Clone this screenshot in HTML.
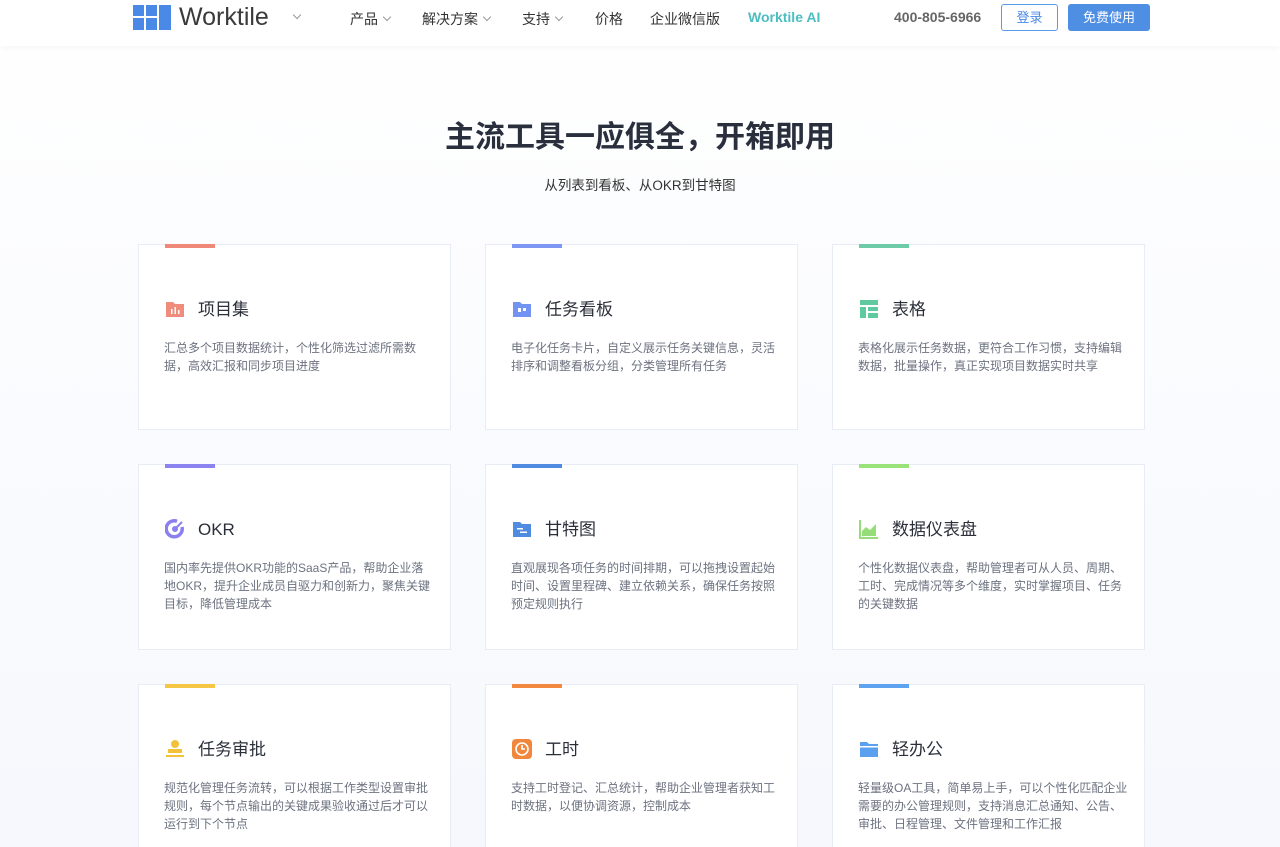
<!DOCTYPE html>
<html><head><meta charset="utf-8"><style>
*{margin:0;padding:0;box-sizing:border-box}
html{overflow:hidden;height:847px}
body{width:1280px;height:847px;overflow:hidden;font-family:"Liberation Sans","Noto Sans CJK SC",sans-serif;background:linear-gradient(#fff 0,#fbfcfe 300px,#f6f8fd 847px);position:relative}
.hd{position:absolute;top:0;left:0;width:1280px;height:46px;background:#fff;box-shadow:0 2px 8px rgba(0,0,0,.04)}
.a{position:absolute}
.nav{font-size:14px;color:#333;top:9px}
.chev{display:inline-block;width:6px;height:6px;border-right:1px solid #999;border-bottom:1px solid #999;transform:rotate(45deg);margin-left:6px;vertical-align:4px}
h1{position:absolute;top:112px;width:1280px;text-align:center;font-size:30px;color:#2a2f3d;font-weight:bold}
.sub{position:absolute;top:174px;width:1280px;text-align:center;font-size:13.5px;color:#333}
.card{position:absolute;width:313px;height:186px;background:#fff;border:1px solid #e8ecf6}
.bar{position:absolute;left:26px;top:-1px;width:50px;height:4px}
.ic{position:absolute;left:26px;top:54px;width:20px;height:20px}
.t{position:absolute;left:59px;top:54px;font-size:17px;color:#2b2f3a;line-height:22px}
.d{position:absolute;left:25px;top:94px;width:270px;font-size:12px;line-height:18px;color:#6c7280}
</style></head><body>
<div class="hd">
 <svg class="a" style="left:133px;top:5px" width="38" height="25" viewBox="0 0 38 25"><rect x="0" y="0" width="11" height="11" fill="#4a8ae6"/><rect x="13" y="0" width="11" height="11" fill="#4a8ae6"/><rect x="26" y="0" width="12" height="25" fill="#4a8ae6"/><rect x="0" y="13" width="11" height="12" fill="#4a8ae6"/><rect x="13" y="13" width="11" height="12" fill="#4a8ae6"/></svg>
 <div class="a" style="left:179px;top:3px;font-size:25px;color:#3a3a3a">Worktile</div>
 <span class="a chev" style="left:288px;top:12px"></span>
 <div class="a nav" style="left:350px">产品<span class="chev"></span></div>
 <div class="a nav" style="left:422px">解决方案<span class="chev"></span></div>
 <div class="a nav" style="left:522px">支持<span class="chev"></span></div>
 <div class="a nav" style="left:595px">价格</div>
 <div class="a nav" style="left:650px">企业微信版</div>
 <div class="a nav" style="left:748px;color:#4cbec1;font-weight:bold">Worktile AI</div>
 <div class="a" style="left:894px;top:9px;font-size:14px;font-weight:bold;color:#666">400-805-6966</div>
 <div class="a" style="left:1001px;top:4px;width:57px;height:27px;border:1px solid #5a9be8;border-radius:3px;color:#4a8ae6;font-size:13px;text-align:center;line-height:25px">登录</div>
 <div class="a" style="left:1068px;top:4px;width:82px;height:27px;background:#4f8fe3;border-radius:3px;color:#fff;font-size:13px;text-align:center;line-height:27px">免费使用</div>
</div>
<h1>主流工具一应俱全，开箱即用</h1>
<div class="sub">从列表到看板、从OKR到甘特图</div>

<div class="card" style="left:138px;top:244px"><div class="bar" style="background:#f0887a"></div>
<svg class="ic" viewBox="0 0 20 20"><path d="M1 3h7l2 2h9v13H1z" fill="#ef8c7c"/><rect x="6" y="10" width="1.5" height="5" fill="#fff"/><rect x="9.5" y="8" width="1.5" height="7" fill="#fff"/><rect x="13" y="11" width="1.5" height="4" fill="#fff"/></svg>
<div class="t">项目集</div><div class="d">汇总多个项目数据统计，个性化筛选过滤所需数据，高效汇报和同步项目进度</div></div>

<div class="card" style="left:485px;top:244px"><div class="bar" style="background:#7c98f3"></div>
<svg class="ic" viewBox="0 0 20 20"><path d="M1 3h7l2 2h9v13H1z" fill="#7393f2"/><rect x="6" y="9" width="3" height="4" fill="#fff"/><rect x="11" y="9" width="3" height="3" fill="#fff"/></svg>
<div class="t">任务看板</div><div class="d">电子化任务卡片，自定义展示任务关键信息，灵活排序和调整看板分组，分类管理所有任务</div></div>

<div class="card" style="left:832px;top:244px"><div class="bar" style="background:#6dcba8"></div>
<svg class="ic" viewBox="0 0 20 20"><rect x="1" y="1" width="18" height="5" fill="#5fc9a0"/><rect x="1" y="8" width="6" height="11" fill="#5fc9a0"/><rect x="9" y="8" width="10" height="4" fill="#5fc9a0"/><rect x="9" y="14" width="10" height="5" fill="#5fc9a0"/></svg>
<div class="t">表格</div><div class="d">表格化展示任务数据，更符合工作习惯，支持编辑数据，批量操作，真正实现项目数据实时共享</div></div>

<div class="card" style="left:138px;top:464px"><div class="bar" style="background:#8b83ef"></div>
<svg class="ic" viewBox="0 0 20 20"><path d="M17 8A8 8 0 1 1 12 2.3" stroke="#8a80ee" stroke-width="3.5" fill="none"/><circle cx="10" cy="10" r="3" fill="#8a80ee"/><path d="M10 10l7-7" stroke="#8a80ee" stroke-width="2"/></svg>
<div class="t">OKR</div><div class="d">国内率先提供OKR功能的SaaS产品，帮助企业落地OKR，提升企业成员自驱力和创新力，聚焦关键目标，降低管理成本</div></div>

<div class="card" style="left:485px;top:464px"><div class="bar" style="background:#4f8be0"></div>
<svg class="ic" viewBox="0 0 20 20"><path d="M1 3h7l2 2h9v13H1z" fill="#4f8be0"/><rect x="5" y="9" width="6" height="1.5" fill="#fff"/><rect x="8" y="12.5" width="7" height="1.5" fill="#fff"/></svg>
<div class="t">甘特图</div><div class="d">直观展现各项任务的时间排期，可以拖拽设置起始时间、设置里程碑、建立依赖关系，确保任务按照预定规则执行</div></div>

<div class="card" style="left:832px;top:464px"><div class="bar" style="background:#9ae37a"></div>
<svg class="ic" viewBox="0 0 20 20"><path d="M1 1v18h18" stroke="#94dd78" stroke-width="2" fill="none"/><path d="M3 17V12l4-4 4 3 6-6v12z" fill="#94dd78"/></svg>
<div class="t">数据仪表盘</div><div class="d">个性化数据仪表盘，帮助管理者可从人员、周期、工时、完成情况等多个维度，实时掌握项目、任务的关键数据</div></div>

<div class="card" style="left:138px;top:684px"><div class="bar" style="background:#f6c744"></div>
<svg class="ic" viewBox="0 0 20 20"><circle cx="10" cy="5" r="4" fill="#f4c23a"/><rect x="3" y="10" width="14" height="4" fill="#f4c23a"/><rect x="1" y="16" width="18" height="2" fill="#f4c23a"/></svg>
<div class="t">任务审批</div><div class="d">规范化管理任务流转，可以根据工作类型设置审批规则，每个节点输出的关键成果验收通过后才可以运行到下个节点</div></div>

<div class="card" style="left:485px;top:684px"><div class="bar" style="background:#f3883f"></div>
<svg class="ic" viewBox="0 0 20 20"><rect x="0" y="0" width="20" height="20" rx="4" fill="#f1873d"/><circle cx="10" cy="10" r="6" fill="none" stroke="#fff" stroke-width="1.6"/><path d="M10 6v4h3" stroke="#fff" stroke-width="1.6" fill="none"/></svg>
<div class="t">工时</div><div class="d">支持工时登记、汇总统计，帮助企业管理者获知工时数据，以便协调资源，控制成本</div></div>

<div class="card" style="left:832px;top:684px"><div class="bar" style="background:#5fa3f0"></div>
<svg class="ic" viewBox="0 0 20 20"><path d="M1 3h7l2 2h9v13H1z" fill="#5aa0ee"/><rect x="1" y="7" width="18" height="1.5" fill="#fff"/></svg>
<div class="t">轻办公</div><div class="d">轻量级OA工具，简单易上手，可以个性化匹配企业需要的办公管理规则，支持消息汇总通知、公告、审批、日程管理、文件管理和工作汇报</div></div>
</body></html>
